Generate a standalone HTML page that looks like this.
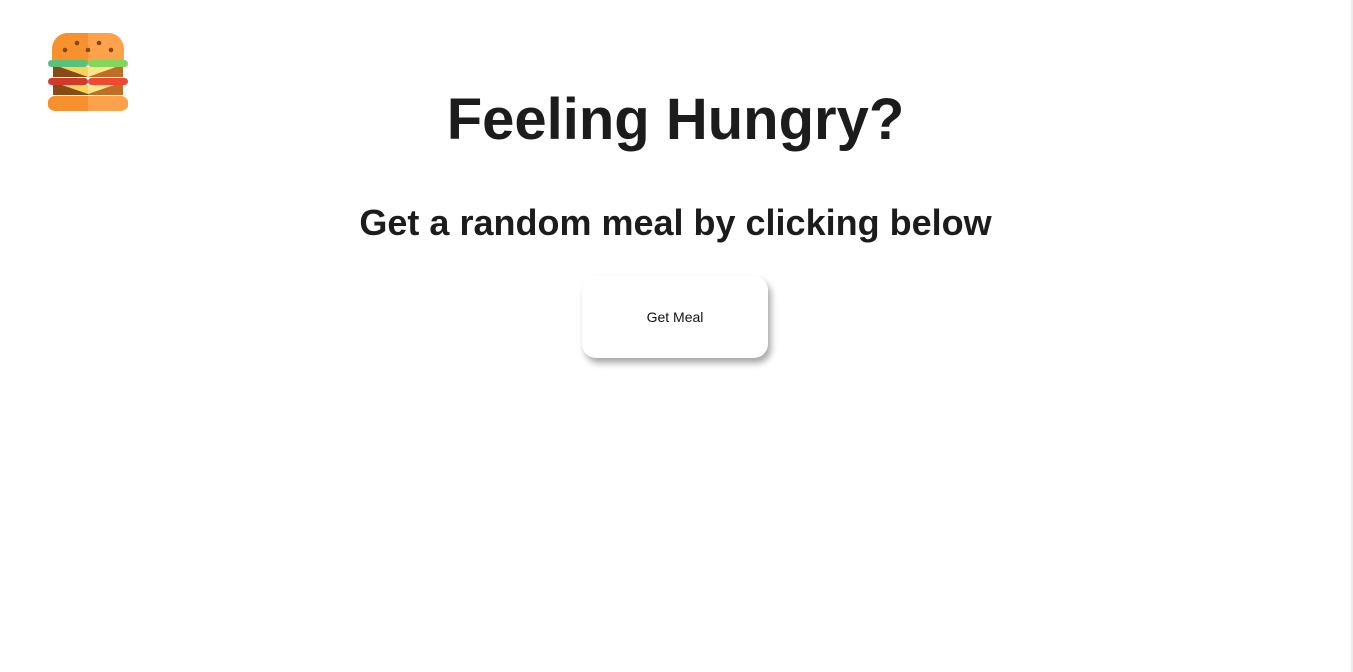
<!DOCTYPE html>
<html><head><meta charset="utf-8"><style>
html,body{margin:0;padding:0;background:#fff;width:1353px;height:672px;overflow:hidden;font-family:"Liberation Sans",sans-serif}
.sb{position:absolute;left:1351px;top:0;width:2px;height:672px;background:#ececec}
.logo{position:absolute;left:48px;top:33px}
h1{position:absolute;left:0;width:1351px;top:86px;margin:0;text-align:center;font-size:58px;font-weight:bold;color:#1c1c1c;letter-spacing:0}
h2{position:absolute;left:0;width:1351px;top:202px;margin:0;text-align:center;font-size:36px;font-weight:bold;color:#1c1c1c;letter-spacing:0}
.btn{position:absolute;left:582px;top:276px;width:186px;height:82px;border-radius:14px;background:#fff;box-shadow:3px 5px 7px rgba(0,0,0,0.35);display:flex;align-items:center;justify-content:center;font-size:14px;color:#111}
</style></head><body>
<div class="sb"></div>
<svg class="logo" width="80" height="78" viewBox="0 0 80 78">
<path d="M18 0 H40 V30 H4 V16 A16 16 0 0 1 18 0Z" fill="#f7912e"/>
<path d="M40 0 H62 A16 16 0 0 1 76 16 V30 H40Z" fill="#fca24a"/>
<circle cx="17" cy="17" r="2.3" fill="#8a4416"/><circle cx="29" cy="10" r="2.3" fill="#8a4416"/><circle cx="40" cy="17" r="2.3" fill="#8a4416"/><circle cx="51" cy="10" r="2.3" fill="#8a4416"/><circle cx="63" cy="17" r="2.3" fill="#8a4416"/>
<rect x="5" y="34" width="35" height="10" fill="#8a4a17"/><rect x="40" y="34" width="35" height="10" fill="#c26c26"/>
<path d="M12 34 H40 V44Z" fill="#fbd35a"/><path d="M68 34 H40 V44Z" fill="#fde68a"/>
<rect x="0" y="27" width="40" height="7" rx="3.5" fill="#56c27a"/><rect x="40" y="27" width="40" height="7" rx="3.5" fill="#7fd85a"/>
<rect x="0" y="45" width="40" height="7" rx="3.5" fill="#d23a2c"/><rect x="40" y="45" width="40" height="7" rx="3.5" fill="#ee4a32"/>
<rect x="5" y="52" width="35" height="10" fill="#8a4a17"/><rect x="40" y="52" width="35" height="10" fill="#c26c26"/>
<path d="M14 52 H40 V61Z" fill="#fbd35a"/><path d="M66 52 H40 V61Z" fill="#fde68a"/>
<path d="M7 63 H40 V78 H7 A7.5 7.5 0 0 1 7 63Z" fill="#f7912e"/>
<path d="M40 63 H73 A7.5 7.5 0 0 1 73 78 H40Z" fill="#fca24a"/>
</svg>
<h1>Feeling Hungry?</h1>
<h2>Get a random meal by clicking below</h2>
<div class="btn">Get Meal</div>
</body></html>
